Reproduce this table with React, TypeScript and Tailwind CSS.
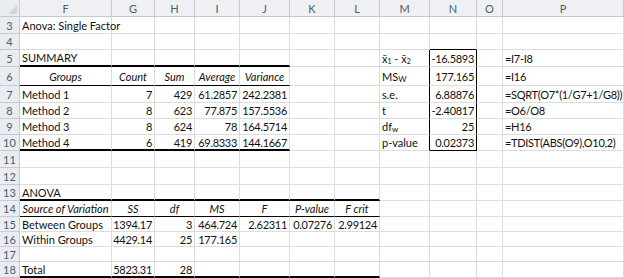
import React from 'react';

type Align = 'l' | 'r' | 'c';

interface CellSpec {
  v?: React.ReactNode;
  a?: Align;
  i?: boolean;
  b?: 'thick' | 'thin';
  rb?: boolean;
}

const COLS = ['F', 'G', 'H', 'I', 'J', 'K', 'L', 'M', 'N', 'O', 'P'];

const gridCols =
  'grid grid-cols-[20px_92px_43px_40px_45px_50px_45px_45px_50px_47px_26px_121px]';

const XBar = ({ n }: { n: number }) => (
  <span>
    x&#772;<sub className="text-[7px] relative top-[1px]">{n}</sub>
  </span>
);

const Sub = ({ base, s }: { base: string; s: string }) => (
  <span>
    {base}
    <sub className="text-[8px] relative top-[1px]">{s}</sub>
  </span>
);

// formulas in column P are typed a touch tighter so the longest one fits
const Formula = ({ f }: { f: string }) => <span className="tracking-[-0.3px]">{f}</span>;

// each row: row number, height class, cells F..P
const rows: { n: number; h: string; cells: CellSpec[] }[] = [
  { n: 3, h: 'h-[17px]', cells: [{ v: 'Anova: Single Factor' }] },
  { n: 4, h: 'h-[16px]', cells: [{}, {}, {}, {}, {}, {}, {}, {}, { b: 'thin' }] },
  {
    n: 5,
    h: 'h-[17px]',
    cells: [
      { v: 'SUMMARY', b: 'thick' },
      { b: 'thick' },
      { b: 'thick' },
      { b: 'thick' },
      { b: 'thick' },
      {},
      {},
      { v: <span><XBar n={1} /> - <XBar n={2} /></span>, rb: true },
      { v: '-16.5893', a: 'r', rb: true },
      {},
      { v: <Formula f="=I7-I8" /> },
    ],
  },
  {
    n: 6,
    h: 'h-[19px]',
    cells: [
      { v: 'Groups', a: 'c', i: true, b: 'thin' },
      { v: 'Count', a: 'c', i: true, b: 'thin' },
      { v: 'Sum', a: 'c', i: true, b: 'thin' },
      { v: 'Average', a: 'c', i: true, b: 'thin' },
      { v: 'Variance', a: 'c', i: true, b: 'thin' },
      {},
      {},
      { v: <Sub base="MS" s="W" />, rb: true },
      { v: '177.165', a: 'r', rb: true },
      {},
      { v: <Formula f="=I16" /> },
    ],
  },
  {
    n: 7,
    h: 'h-[17px]',
    cells: [
      { v: 'Method 1' },
      { v: '7', a: 'r' },
      { v: '429', a: 'r' },
      { v: '61.2857', a: 'r' },
      { v: '242.2381', a: 'r' },
      {},
      {},
      { v: 's.e.', rb: true },
      { v: '6.88876', a: 'r', rb: true },
      {},
      { v: <Formula f="=SQRT(O7*(1/G7+1/G8))" /> },
    ],
  },
  {
    n: 8,
    h: 'h-[16px]',
    cells: [
      { v: 'Method 2' },
      { v: '8', a: 'r' },
      { v: '623', a: 'r' },
      { v: '77.875', a: 'r' },
      { v: '157.5536', a: 'r' },
      {},
      {},
      { v: 't', rb: true },
      { v: '-2.40817', a: 'r', rb: true },
      {},
      { v: <Formula f="=O6/O8" /> },
    ],
  },
  {
    n: 9,
    h: 'h-[16px]',
    cells: [
      { v: 'Method 3' },
      { v: '8', a: 'r' },
      { v: '624', a: 'r' },
      { v: '78', a: 'r' },
      { v: '164.5714', a: 'r' },
      {},
      {},
      { v: <Sub base="df" s="w" />, rb: true },
      { v: '25', a: 'r', rb: true },
      {},
      { v: <Formula f="=H16" /> },
    ],
  },
  {
    n: 10,
    h: 'h-[16px]',
    cells: [
      { v: 'Method 4', b: 'thick' },
      { v: '6', a: 'r', b: 'thick' },
      { v: '419', a: 'r', b: 'thick' },
      { v: '69.8333', a: 'r', b: 'thick' },
      { v: '144.1667', a: 'r', b: 'thick' },
      {},
      {},
      { v: 'p-value', rb: true },
      { v: '0.02373', a: 'r', rb: true, b: 'thin' },
      {},
      { v: <Formula f="=TDIST(ABS(O9),O10,2)" /> },
    ],
  },
  { n: 11, h: 'h-[17px]', cells: [] },
  { n: 12, h: 'h-[17px]', cells: [] },
  {
    n: 13,
    h: 'h-[16px]',
    cells: [
      { v: 'ANOVA', b: 'thick' },
      { b: 'thick' },
      { b: 'thick' },
      { b: 'thick' },
      { b: 'thick' },
      { b: 'thick' },
      { b: 'thick' },
    ],
  },
  {
    n: 14,
    h: 'h-[16px]',
    cells: [
      { v: 'Source of Variation', a: 'c', i: true, b: 'thin' },
      { v: 'SS', a: 'c', i: true, b: 'thin' },
      { v: 'df', a: 'c', i: true, b: 'thin' },
      { v: 'MS', a: 'c', i: true, b: 'thin' },
      { v: 'F', a: 'c', i: true, b: 'thin' },
      { v: 'P-value', a: 'c', i: true, b: 'thin' },
      { v: 'F crit', a: 'c', i: true, b: 'thin' },
    ],
  },
  {
    n: 15,
    h: 'h-[15px]',
    cells: [
      { v: 'Between Groups' },
      { v: '1394.17', a: 'r' },
      { v: '3', a: 'r' },
      { v: '464.724', a: 'r' },
      { v: '2.62311', a: 'r' },
      { v: '0.07276', a: 'r' },
      { v: '2.99124', a: 'r' },
    ],
  },
  {
    n: 16,
    h: 'h-[15px]',
    cells: [
      { v: 'Within Groups' },
      { v: '4429.14', a: 'r' },
      { v: '25', a: 'r' },
      { v: '177.165', a: 'r' },
    ],
  },
  { n: 17, h: 'h-[15px]', cells: [] },
  {
    n: 18,
    h: 'h-[16px]',
    cells: [
      { v: 'Total', b: 'thick' },
      { v: '5823.31', a: 'r', b: 'thick' },
      { v: '28', a: 'r', b: 'thick' },
      { b: 'thick' },
      { b: 'thick' },
      { b: 'thick' },
      { b: 'thick' },
    ],
  },
];

const Cell: React.FC<{ spec: CellSpec }> = ({ spec }) => {
  const align =
    spec.a === 'r'
      ? 'justify-end tracking-[-0.3px]'
      : spec.a === 'c'
        ? 'justify-center'
        : 'justify-start';
  const bottom =
    spec.b === 'thick'
      ? 'border-b-2 border-b-black'
      : spec.b === 'thin'
        ? 'border-b border-b-black'
        : 'border-b border-b-[#dadcdd]';
  const right = spec.rb ? 'border-r-black' : 'border-r-[#dadcdd]';
  return (
    <div
      className={`flex items-center border-r ${right} ${bottom} ${align} px-[2px] whitespace-nowrap overflow-visible ${spec.i ? 'italic' : ''}`}
    >
      {spec.v}
    </div>
  );
};

export default function App() {
  return (
    <div
      className="w-[624px] h-[278px] overflow-hidden bg-white text-[#111] text-[11px] leading-none"
      style={{ fontFamily: 'Lato, "Liberation Sans", sans-serif' }}
    >
      {/* column header row */}
      <div className={`${gridCols} h-[17px] bg-[#eef0f3] text-[#4f5b6b]`}>
        <div className="relative border-r border-b border-[#c5cad2] bg-[#e9edf2]">
          <div className="absolute right-[2px] bottom-[2px] w-0 h-0 border-l-[9px] border-l-transparent border-b-[9px] border-b-[#d2d6dc]" />
        </div>
        {COLS.map((c) => (
          <div key={c} className="flex items-center justify-center border-r border-b border-[#c5cad2]">
            {c}
          </div>
        ))}
      </div>

      {rows.map((row) => (
        <div key={row.n} className={`${gridCols} ${row.h}`}>
          <div className="flex items-center justify-center border-r border-b border-[#c5cad2] bg-[#e9edf2] text-[#4f5b6b]">
            {row.n}
          </div>
          {COLS.map((c, idx) => (
            <Cell key={c} spec={row.cells[idx] ?? {}} />
          ))}
        </div>
      ))}
    </div>
  );
}
